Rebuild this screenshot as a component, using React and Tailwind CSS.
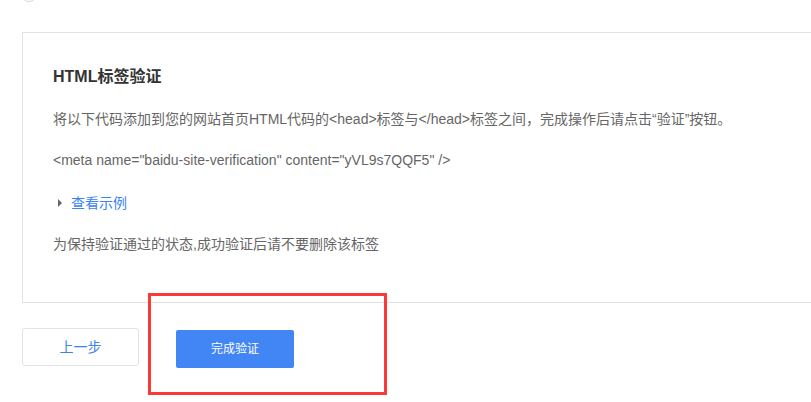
export default function App() {
  return (
    <div className="relative w-[811px] h-[402px] overflow-hidden bg-white font-['Liberation_Sans','Noto_Sans_CJK_SC',sans-serif]">
      {/* radio peeking from the previous step */}
      <div className="ml-[21px] -mt-[14px] h-[16px] w-[16px] rounded-full border border-[#d9d9d9]" />

      {/* verification card */}
      <div className="ml-[22px] mt-[30px] h-[271px] w-[800px] border border-[#e1e1e1] pl-[30px] pt-[32px]">
        <h2 className="text-[16px] leading-[24px] font-bold text-[#333]">
          HTML标签验证
        </h2>
        <p className="mt-[20px] text-[14px] leading-[20px] text-[#666]">
          将以下代码添加到您的网站首页HTML代码的&lt;head&gt;标签与&lt;/head&gt;标签之间，完成操作后请点击“验证”按钮。
        </p>
        <p className="mt-[21px] text-[14px] leading-[20px] text-[#666]">
          &lt;meta name="baidu-site-verification" content="yVL9s7QQF5" /&gt;
        </p>
        <div className="mt-[23px] flex items-center text-[14px] leading-[20px]">
          <span className="ml-[5px] mr-[9px] h-0 w-0 border-y-[4px] border-l-[4px] border-y-transparent border-l-[#666]" />
          <span className="text-[#3b82f6]">查看示例</span>
        </div>
        <p className="mt-[21px] text-[14px] leading-[20px] text-[#666]">
          为保持验证通过的状态,成功验证后请不要删除该标签
        </p>
      </div>

      {/* actions */}
      <div className="ml-[22px] mt-[25px] flex items-start gap-[37px]">
        <button className="h-[38px] w-[117px] rounded-[3px] border border-[#e3e3e3] bg-white text-[14px] text-[#3b82f6]">
          上一步
        </button>
        <button className="mt-[2px] h-[38px] w-[118px] rounded-[2px] bg-[#4285f4] text-[12px] text-white">
          完成验证
        </button>
      </div>

      {/* annotation highlight */}
      <div className="absolute left-[148px] top-[293px] h-[102px] w-[239px] border-[3px] border-[#fc3838]" />
    </div>
  );
}
